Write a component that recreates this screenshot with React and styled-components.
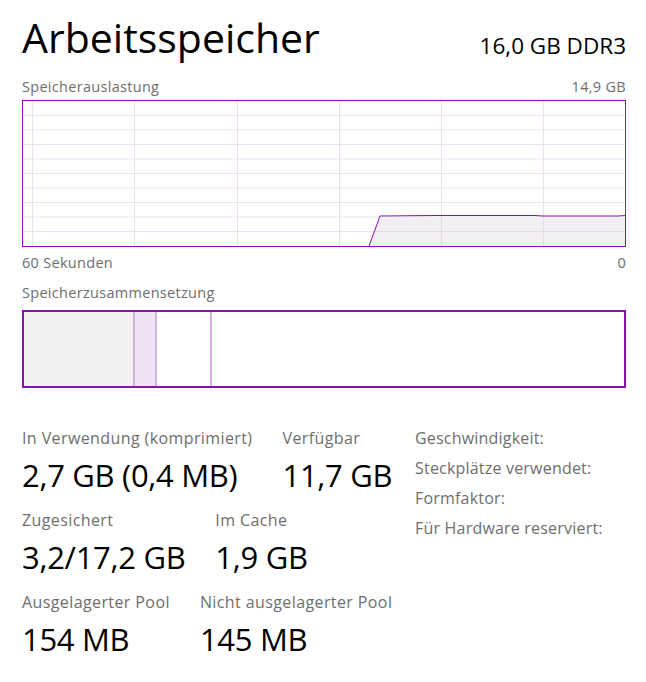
import React from 'react'
import styled, { createGlobalStyle } from 'styled-components'

const GlobalStyle = createGlobalStyle`
  body {
    margin: 0;
    background: #fff;
    font-family: "Open Sans", "Noto Sans", sans-serif;
  }
`

const PURPLE = '#8b12ae'
const GRID = '#eddff1'

const Page = styled.div`
  width: 646px;
  padding: 9px 20px 0 22px;
  box-sizing: border-box;
`

const Header = styled.div`
  display: flex;
  justify-content: space-between;
  align-items: baseline;
  height: 65px;
`

const Title = styled.h1`
  margin: 0;
  font-size: 41px;
  font-weight: 400;
  color: #000;
`

const Spec = styled.div`
  font-size: 22.5px;
  color: #000;
  position: relative;
  top: 1px;
`

const LabelRow = styled.div`
  display: flex;
  justify-content: space-between;
  font-size: 14.5px;
  color: #6e6e6e;
  height: ${p => p.h || 26}px;
  line-height: ${p => p.h || 26}px;
  letter-spacing: 0.3px;
`

const Graph = styled.div`
  height: 145px;
  border: 1px solid ${PURPLE};
  svg { display: block; }
`

const Composition = styled.div`
  height: 74px;
  border: 2px solid ${PURPLE};
  display: flex;
  margin-top: 3px;
`

const Segment = styled.div`
  width: ${p => p.w ? p.w + 'px' : 'auto'};
  flex: ${p => p.w ? 'none' : 1};
  background: ${p => p.bg || '#fff'};
  border-right: ${p => p.divider ? '2px solid #d3b2dc' : 'none'};
`

const Stats = styled.div`
  display: flex;
  margin-top: 35px;
`

const Main = styled.div`
  width: 393px;
  padding-top: 5px;
`

const StatRow = styled.div`
  display: flex;
  gap: 30px;
  height: 82px;
`

const Stat = styled.div`
  display: flex;
  flex-direction: column;
`

const StatLabel = styled.div`
  font-size: 16px;
  color: #6e6e6e;
  letter-spacing: 0.4px;
  line-height: 20px;
`

const StatValue = styled.div`
  font-size: 31px;
  color: #000;
  letter-spacing: -0.3px;
  line-height: 54px;
`

const Details = styled.div`
  display: flex;
  flex-direction: column;
`

const DetailLabel = styled.div`
  font-size: 16px;
  color: #6e6e6e;
  letter-spacing: 0.2px;
  line-height: 30px;
`

const hLines = [1, 2, 3, 4, 5, 6, 7, 8, 9]
const vLines = [9, 111, 214, 316, 418, 520]

function UsageGraph() {
  return (
    <Graph>
      <svg width="602" height="145" viewBox="0 0 602 145">
        {hLines.map(i => (
          <line key={'h' + i} x1="0" x2="602" y1={i * 14.5} y2={i * 14.5} stroke={GRID} strokeWidth="1" />
        ))}
        {vLines.map(x => (
          <line key={'v' + x} x1={x + 0.5} x2={x + 0.5} y1="0" y2="145" stroke={GRID} strokeWidth="1" />
        ))}
        <polygon
          points="346,145 357,115 411,114.5 512,114.5 520,115 595,115 602,114.5 602,145"
          fill="#f1eef4"
        />
        {[418, 520].map(x => (
          <line key={'o' + x} x1={x + 0.5} x2={x + 0.5} y1="115" y2="145" stroke="#e2d8e6" strokeWidth="1" />
        ))}
        <line x1="352" x2="602" y1="130.5" y2="130.5" stroke="#e2d8e6" strokeWidth="1" />
        <polyline
          points="346,145 357,115 411,114.5 512,114.5 520,115 595,115 602,114.5"
          fill="none"
          stroke={PURPLE}
          strokeWidth="1"
        />
      </svg>
    </Graph>
  )
}

export default function App() {
  return (
    <Page>
      <GlobalStyle />
      <Header>
        <Title>Arbeitsspeicher</Title>
        <Spec>16,0 GB DDR3</Spec>
      </Header>

      <LabelRow>
        <span>Speicherauslastung</span>
        <span>14,9 GB</span>
      </LabelRow>
      <UsageGraph />
      <LabelRow h={32}>
        <span>60 Sekunden</span>
        <span>0</span>
      </LabelRow>

      <LabelRow h={28}>
        <span>Speicherzusammensetzung</span>
      </LabelRow>
      <Composition>
        <Segment w={109} bg="#f3f0f4" divider />
        <Segment w={20} bg="#efe4f3" divider />
        <Segment w={53} divider />
        <Segment />
      </Composition>

      <Stats>
        <Main>
          <StatRow>
            <Stat>
              <StatLabel>In Verwendung (komprimiert)</StatLabel>
              <StatValue>2,7 GB (0,4 MB)</StatValue>
            </Stat>
            <Stat>
              <StatLabel>Verfügbar</StatLabel>
              <StatValue>11,7 GB</StatValue>
            </Stat>
          </StatRow>
          <StatRow>
            <Stat>
              <StatLabel>Zugesichert</StatLabel>
              <StatValue>3,2/17,2 GB</StatValue>
            </Stat>
            <Stat>
              <StatLabel>Im Cache</StatLabel>
              <StatValue>1,9 GB</StatValue>
            </Stat>
          </StatRow>
          <StatRow>
            <Stat>
              <StatLabel>Ausgelagerter Pool</StatLabel>
              <StatValue>154 MB</StatValue>
            </Stat>
            <Stat>
              <StatLabel>Nicht ausgelagerter Pool</StatLabel>
              <StatValue>145 MB</StatValue>
            </Stat>
          </StatRow>
        </Main>
        <Details>
          <DetailLabel>Geschwindigkeit:</DetailLabel>
          <DetailLabel>Steckplätze verwendet:</DetailLabel>
          <DetailLabel>Formfaktor:</DetailLabel>
          <DetailLabel>Für Hardware reserviert:</DetailLabel>
        </Details>
      </Stats>
    </Page>
  )
}
